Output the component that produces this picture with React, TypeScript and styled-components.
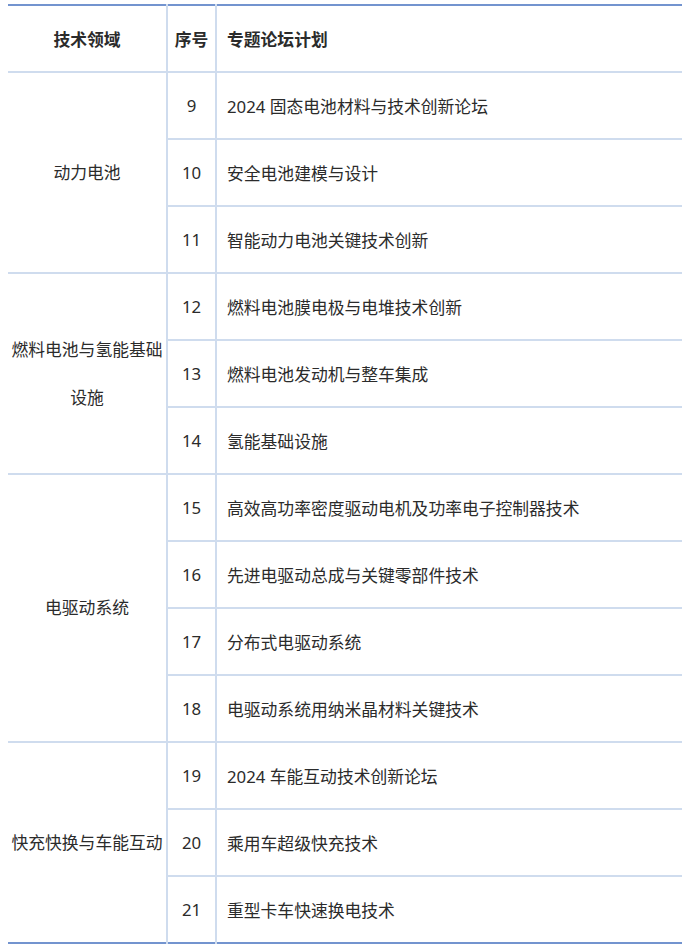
import React from 'react'
import styled, { createGlobalStyle } from 'styled-components'

const GlobalStyle = createGlobalStyle`
  body {
    margin: 0;
    background: #ffffff;
    font-family: 'Noto Sans', 'Noto Sans CJK SC', sans-serif;
    color: #2b2b2b;
  }
`

const Page = styled.div`
  padding: 4px 8px 8px;
`

const Table = styled.table`
  width: 674px;
  border-collapse: collapse;
  table-layout: fixed;
  font-size: 16.8px;
  border-top: 2px solid #7394cf;
  border-bottom: 2px solid #7394cf;
`

const HeadCell = styled.th<{ left?: boolean }>`
  height: 65px;
  padding: 0 ${({ left }) => (left ? '10px' : '2px')};
  font-weight: 700;
  text-align: ${({ left }) => (left ? 'left' : 'center')};
  border-bottom: 2px solid #cfdcee;
  border-left: 2px solid #cfdcee;

  &:first-child {
    border-left: none;
  }
`

const Cell = styled.td<{ left?: boolean }>`
  height: 65px;
  padding: 0 ${({ left }) => (left ? '10px' : '2px')};
  text-align: ${({ left }) => (left ? 'left' : 'center')};
  vertical-align: middle;
  border-top: 2px solid #cfdcee;
  border-left: 2px solid #cfdcee;
  white-space: nowrap;
`

const AreaCell = styled.td`
  padding: 0 2px;
  text-align: center;
  vertical-align: middle;
  line-height: 48px;
  border-top: 2px solid #cfdcee;
`

type Group = { area: string; rows: [number, string][] }

const groups: Group[] = [
  {
    area: '动力电池',
    rows: [
      [9, '2024 固态电池材料与技术创新论坛'],
      [10, '安全电池建模与设计'],
      [11, '智能动力电池关键技术创新'],
    ],
  },
  {
    area: '燃料电池与氢能基础设施',
    rows: [
      [12, '燃料电池膜电极与电堆技术创新'],
      [13, '燃料电池发动机与整车集成'],
      [14, '氢能基础设施'],
    ],
  },
  {
    area: '电驱动系统',
    rows: [
      [15, '高效高功率密度驱动电机及功率电子控制器技术'],
      [16, '先进电驱动总成与关键零部件技术'],
      [17, '分布式电驱动系统'],
      [18, '电驱动系统用纳米晶材料关键技术'],
    ],
  },
  {
    area: '快充快换与车能互动',
    rows: [
      [19, '2024 车能互动技术创新论坛'],
      [20, '乘用车超级快充技术'],
      [21, '重型卡车快速换电技术'],
    ],
  },
]

const App = () => (
  <Page>
    <GlobalStyle />
    <Table>
      <colgroup>
        <col style={{ width: 159 }} />
        <col style={{ width: 49 }} />
        <col />
      </colgroup>
      <thead>
        <tr>
          <HeadCell>技术领域</HeadCell>
          <HeadCell>序号</HeadCell>
          <HeadCell left>专题论坛计划</HeadCell>
        </tr>
      </thead>
      <tbody>
        {groups.map((g) =>
          g.rows.map(([no, title], i) => (
            <tr key={no}>
              {i === 0 && <AreaCell rowSpan={g.rows.length}>{g.area}</AreaCell>}
              <Cell>{no}</Cell>
              <Cell left>{title}</Cell>
            </tr>
          ))
        )}
      </tbody>
    </Table>
  </Page>
)

export default App
